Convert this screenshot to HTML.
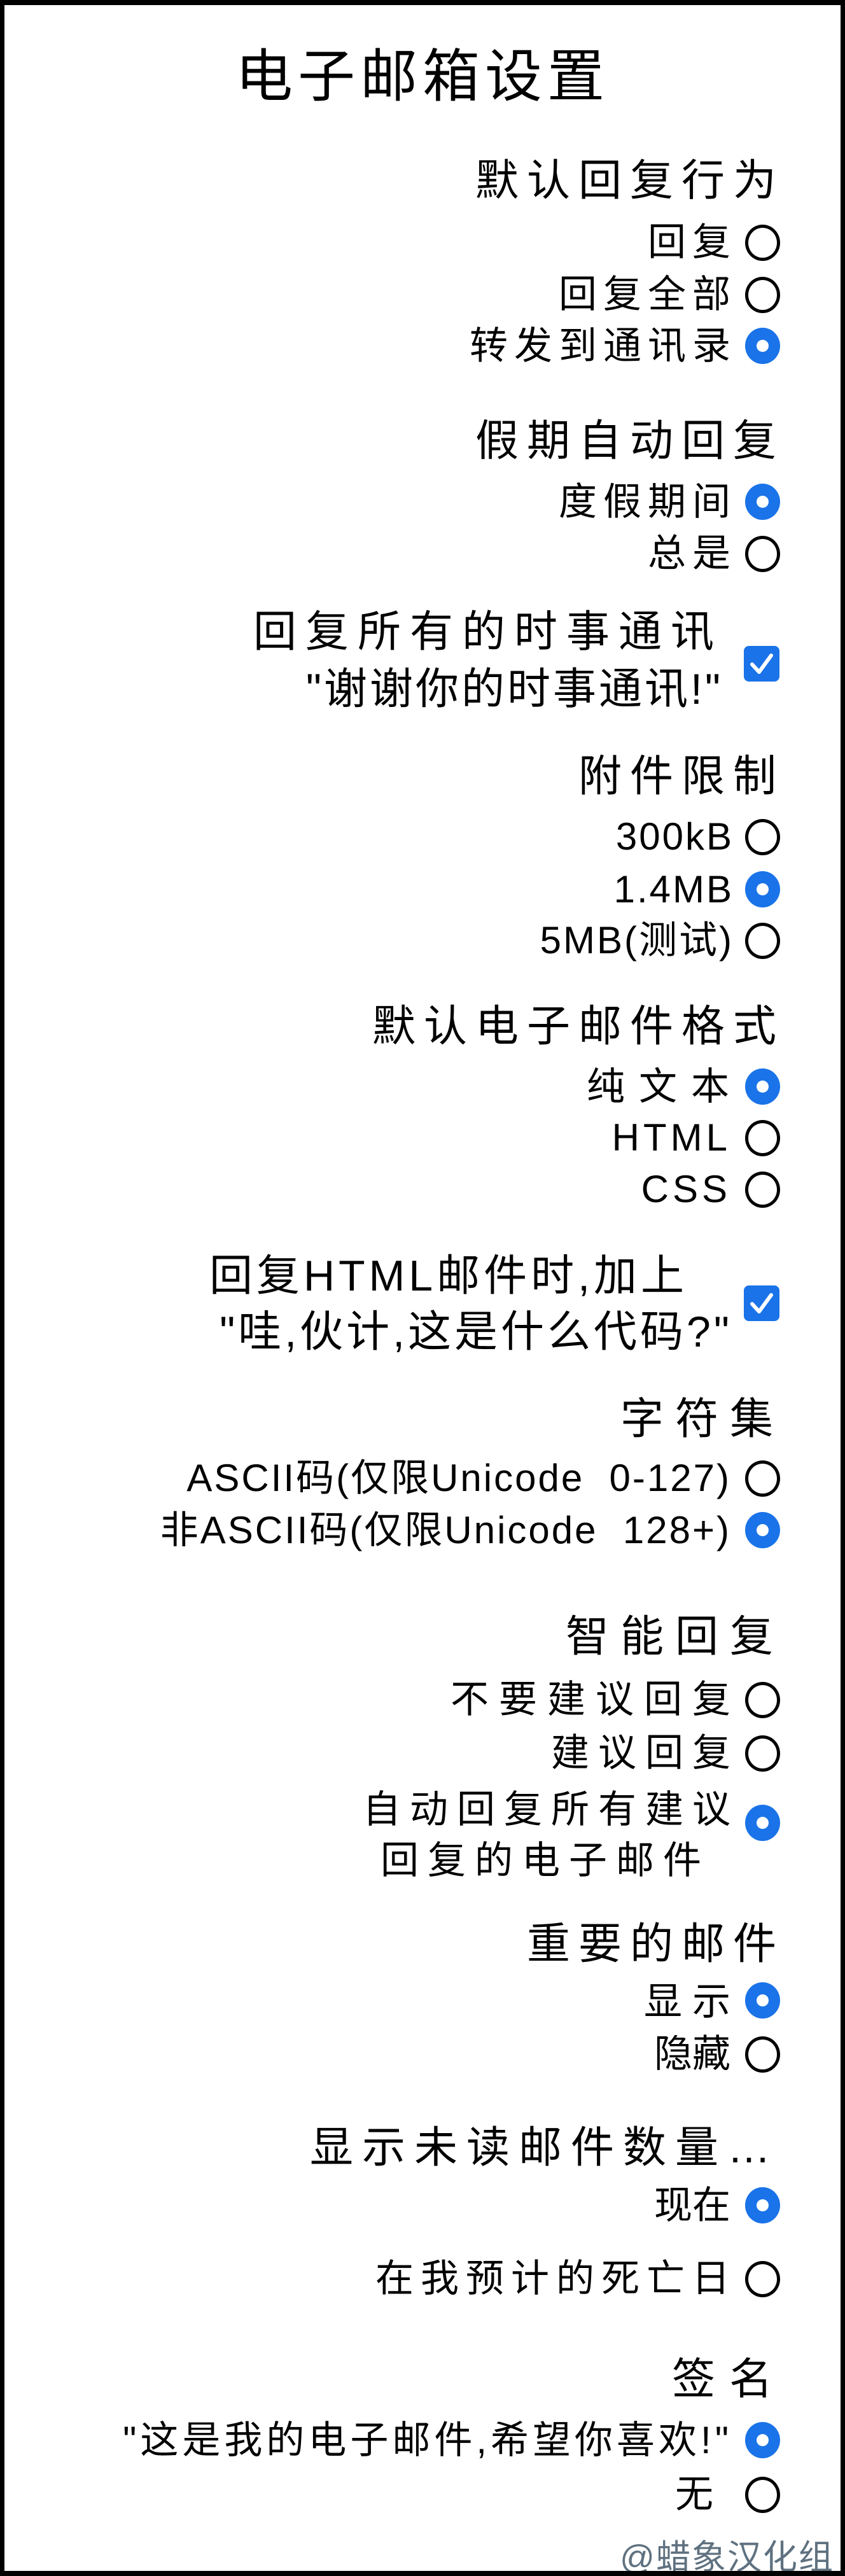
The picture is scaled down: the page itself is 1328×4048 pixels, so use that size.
<!DOCTYPE html>
<html><head><meta charset="utf-8"><style>
html,body{margin:0;padding:0;background:#fff;}
#p{position:relative;width:1328px;height:4048px;box-sizing:border-box;border:8px solid #000;border-left-width:7px;border-right-width:7px;overflow:hidden;font-family:"Liberation Sans","Noto Sans CJK SC",sans-serif;color:#000;}
.t{position:absolute;left:0;right:0;text-align:center;font-size:90px;line-height:110px;letter-spacing:8px;}
.h{position:absolute;right:88px;font-size:68px;line-height:90px;letter-spacing:13px;white-space:nowrap;text-align:right;}
.o{position:absolute;right:163px;font-size:60px;line-height:80px;letter-spacing:10px;white-space:nowrap;text-align:right;}
.l{letter-spacing:3px;right:168px;}
.rd{position:absolute;left:1164px;width:45px;height:47px;border:5px solid #000;border-radius:50%;}
.rf{position:absolute;left:1164px;width:55px;height:57px;border-radius:50%;background:#1a73e8;}
.rf::after{content:"";position:absolute;left:18px;top:19px;width:19px;height:19px;border-radius:50%;background:#fff;}
.cb{position:absolute;left:1162px;width:56px;height:56px;border-radius:8px;background:#1a73e8;}
.m{position:absolute;right:10px;font-size:54px;line-height:60px;color:#5f7180;letter-spacing:2px;}
</style></head><body><div id="p">
<div class="t" style="top:58px">电子邮箱设置</div>

<div class="h" style="top:231px">默认回复行为</div>
<div class="o" style="top:333px">回复</div><div class="rd" style="top:345px"></div>
<div class="o" style="top:415px">回复全部</div><div class="rd" style="top:427px"></div>
<div class="o" style="top:496px">转发到通讯录</div><div class="rf" style="top:507px"></div>

<div class="h" style="top:640px">假期自动回复</div>
<div class="o" style="top:741px">度假期间</div><div class="rf" style="top:752px"></div>
<div class="o" style="top:822px">总是</div><div class="rd" style="top:834px"></div>

<div class="h" style="top:940px;right:185px;letter-spacing:14px">回复所有的时事通讯</div>
<div class="h" style="top:1030px;right:185px;letter-spacing:4px">"谢谢你的时事通讯!"</div>
<div class="cb" style="top:1007px"><svg width="56" height="56" viewBox="0 0 56 56"><path d="M13 29 L24 41 L43 15" fill="none" stroke="#fff" stroke-width="6" stroke-linecap="round" stroke-linejoin="round"/></svg></div>

<div class="h" style="top:1167px">附件限制</div>
<div class="o l" style="top:1267px">300kB</div><div class="rd" style="top:1279px"></div>
<div class="o l" style="top:1350px">1.4MB</div><div class="rf" style="top:1361px"></div>
<div class="o l" style="top:1430px">5MB(测试)</div><div class="rd" style="top:1442px"></div>

<div class="h" style="top:1560px">默认电子邮件格式</div>
<div class="o" style="top:1660px;letter-spacing:22px;right:153px">纯文本</div><div class="rf" style="top:1671px"></div>
<div class="o l" style="top:1740px;letter-spacing:6px;right:172px">HTML</div><div class="rd" style="top:1752px"></div>
<div class="o l" style="top:1821px;letter-spacing:6px;right:172px">CSS</div><div class="rd" style="top:1833px"></div>

<div class="h" style="top:1952px;right:240px;letter-spacing:6px">回复HTML邮件时,加上</div>
<div class="h" style="top:2040px;right:170px;letter-spacing:5px">"哇,伙计,这是什么代码?"</div>
<div class="cb" style="top:2012px"><svg width="56" height="56" viewBox="0 0 56 56"><path d="M13 29 L24 41 L43 15" fill="none" stroke="#fff" stroke-width="6" stroke-linecap="round" stroke-linejoin="round"/></svg></div>

<div class="h" style="top:2177px;letter-spacing:18px">字符集</div>
<div class="o l" style="top:2275px;right:172px">ASCII码(仅限Unicode&nbsp; 0-127)</div><div class="rd" style="top:2287px"></div>
<div class="o l" style="top:2357px;right:172px">非ASCII码(仅限Unicode&nbsp; 128+)</div><div class="rf" style="top:2368px"></div>

<div class="h" style="top:2519px;letter-spacing:18px">智能回复</div>
<div class="o" style="top:2623px;letter-spacing:16px;right:157px">不要建议回复</div><div class="rd" style="top:2635px"></div>
<div class="o" style="top:2707px;letter-spacing:14px;right:159px">建议回复</div><div class="rd" style="top:2719px"></div>
<div class="o" style="top:2796px;letter-spacing:14px;right:159px">自动回复所有建议</div><div class="rf" style="top:2828px"></div>
<div class="o" style="top:2876px;letter-spacing:14px;right:205px">回复的电子邮件</div>

<div class="h" style="top:3002px">重要的邮件</div>
<div class="o" style="top:3098px;letter-spacing:16px;right:157px">显示</div><div class="rf" style="top:3107px"></div>
<div class="o" style="top:3180px;right:173px;letter-spacing:0">隐藏</div><div class="rd" style="top:3192px"></div>

<div class="h" style="top:3322px;right:96px;letter-spacing:14px">显示未读邮件数量…</div>
<div class="o" style="top:3418px;right:173px;letter-spacing:0">现在</div><div class="rf" style="top:3429px"></div>
<div class="o" style="top:3533px;letter-spacing:11px">在我预计的死亡日</div><div class="rd" style="top:3545px"></div>

<div class="h" style="top:3686px;letter-spacing:22px;right:85px">签名</div>
<div class="o" style="top:3787px;letter-spacing:6px;right:170px">"这是我的电子邮件,希望你喜欢!"</div><div class="rf" style="top:3798px"></div>
<div class="o" style="top:3872px;right:190px">无</div><div class="rd" style="top:3884px"></div>

<div class="m" style="top:3981px">@蜡象汉化组</div>
</div></body></html>
